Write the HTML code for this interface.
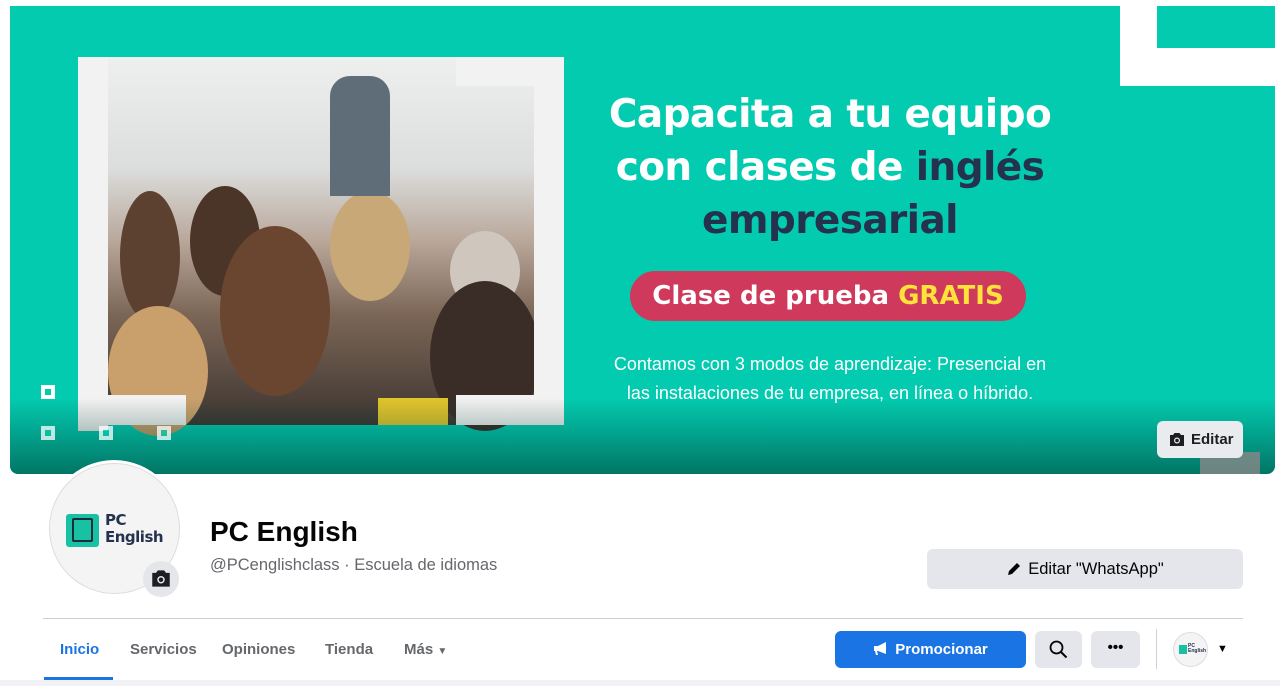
<!DOCTYPE html>
<html><head><meta charset="utf-8"><style>
*{margin:0;padding:0;box-sizing:border-box}
body{width:1280px;height:686px;background:#fff;font-family:"Liberation Sans",sans-serif;position:relative;overflow:hidden}
.abs{position:absolute}
.cover{left:10px;top:6px;width:1265px;height:468px;background:#03cbb0;border-radius:0 0 8px 8px;overflow:hidden}
.shade{left:0;top:392px;width:1265px;height:76px;background:linear-gradient(rgba(0,0,0,0),rgba(0,60,50,.6))}
.sq{width:14px;height:14px;background:#fff;border:4px solid #fff}
.sq::after{content:"";display:block;width:6px;height:6px;background:#03cbb0}
.h1{font-family:"DejaVu Sans",sans-serif;font-weight:bold;font-size:39px;line-height:53px;color:#fff;letter-spacing:-0.6px;text-align:center;width:560px}
.nav{font-size:15px;color:#65676b;font-weight:bold;top:641px}
.hd{border-radius:50%}
</style></head><body>
<div class="abs cover">
 <div class="abs" style="left:98px;top:51px;width:426px;height:368px;background:linear-gradient(180deg,#eef0f0 0%,#dcdedd 30%,#b9a79a 50%,#7b6656 70%,#3e3531 100%)"></div>
 <div class="abs hd" style="left:110px;top:185px;width:60px;height:130px;background:#5c4030"></div>
 <div class="abs hd" style="left:180px;top:180px;width:70px;height:110px;background:#4b3428"></div>
 <div class="abs hd" style="left:320px;top:185px;width:80px;height:110px;background:#c9a878"></div>
 <div class="abs hd" style="left:440px;top:225px;width:70px;height:80px;background:#cfc6bd"></div>
 <div class="abs hd" style="left:210px;top:220px;width:110px;height:170px;background:#6a4630"></div>
 <div class="abs hd" style="left:98px;top:300px;width:100px;height:130px;background:#c9a06c"></div>
 <div class="abs hd" style="left:420px;top:275px;width:110px;height:150px;background:#3a2c26"></div>
 <div class="abs" style="left:320px;top:70px;width:60px;height:120px;background:#5e6d78;border-radius:20px 20px 0 0"></div>
 <div class="abs" style="left:68px;top:51px;width:30px;height:374px;background:#f2f2f2"></div>
 <div class="abs" style="left:68px;top:389px;width:108px;height:30px;background:#f2f2f2"></div>
 <div class="abs" style="left:446px;top:51px;width:108px;height:29px;background:#f2f2f2"></div>
 <div class="abs" style="left:524px;top:51px;width:30px;height:368px;background:#f2f2f2"></div>
 <div class="abs" style="left:446px;top:389px;width:108px;height:30px;background:#f2f2f2"></div>
 <div class="abs" style="left:368px;top:392px;width:70px;height:27px;background:#e3c52c"></div>
 <div class="abs" style="left:1110px;top:0;width:155px;height:80px;background:#fff"></div>
 <div class="abs" style="left:1147px;top:0;width:118px;height:42px;background:#03cbb0"></div>
 <div class="abs h1" style="left:540px;top:82px">Capacita a tu equipo<br>con clases de <span style="color:#24324d">inglés</span><br><span style="color:#24324d">empresarial</span></div>
 <div class="abs" style="left:620px;top:265px;width:396px;height:50px;border-radius:25px;background:#cf3a5c;color:#fff;font-family:'DejaVu Sans',sans-serif;font-weight:bold;font-size:26px;text-align:center;line-height:50px">Clase de prueba <span style="color:#ffe23a">GRATIS</span></div>
 <div class="abs" style="left:540px;top:344px;width:560px;text-align:center;color:#fff;font-size:18px;line-height:29px">Contamos con 3 modos de aprendizaje: Presencial en<br>las instalaciones de tu empresa, en línea o híbrido.</div>
 <div class="abs shade"></div>
 <div class="abs sq" style="left:31px;top:379px"></div>
 <div class="abs sq" style="left:31px;top:420px;opacity:.75"></div>
 <div class="abs sq" style="left:89px;top:420px;opacity:.75"></div>
 <div class="abs sq" style="left:147px;top:420px;opacity:.75"></div>
 <div class="abs" style="left:1190px;top:446px;width:60px;height:22px;background:#888;opacity:.8"></div>
 <div class="abs" style="left:1147px;top:415px;width:86px;height:37px;border-radius:6px;background:#e9ebee;font-size:15px;font-weight:bold;color:#1c1e21;line-height:37px;padding-left:34px">Editar
  <svg class="abs" style="left:12px;top:11px" width="16" height="15" viewBox="0 0 16 15"><path d="M1 3h3l1.5-2h5L12 3h3v11H1z" fill="#1c1e21"/><circle cx="8" cy="8.5" r="3" fill="#e9ebee"/><circle cx="8" cy="8.5" r="1.8" fill="#1c1e21"/></svg></div>
</div>
<div class="abs" style="left:46px;top:460px;width:136px;height:138px;border-radius:50%;background:#fff"></div>
<div class="abs" style="left:49px;top:463px;width:131px;height:131px;border-radius:50%;background:#f4f4f4;border:1px solid #ddd"></div>
<div class="abs" style="left:66px;top:514px;width:33px;height:33px;border-radius:3px;background:#17c2a4"></div>
<div class="abs" style="left:72px;top:518px;width:21px;height:24px;border:2px solid #1f2b3a;border-radius:2px"></div>
<div class="abs" style="left:105px;top:512px;font-family:'DejaVu Sans',sans-serif;font-weight:bold;font-size:15px;line-height:17px;color:#24324d;letter-spacing:-0.5px">PC<br>English</div>
<div class="abs" style="left:143px;top:561px;width:36px;height:36px;border-radius:50%;background:#e4e6eb"></div>
<svg class="abs" style="left:151px;top:569px" width="20" height="19" viewBox="0 0 16 15"><path d="M1 3h3l1.5-2h5L12 3h3v11H1z" fill="#1c1e21"/><circle cx="8" cy="8.5" r="3" fill="#e4e6eb"/><circle cx="8" cy="8.5" r="1.8" fill="#1c1e21"/></svg>
<div class="abs" style="left:210px;top:516px;font-size:28px;font-weight:bold;color:#050505">PC English</div>
<div class="abs" style="left:210px;top:556px;font-size:16.5px;color:#65676b">@PCenglishclass · Escuela de idiomas</div>
<div class="abs" style="left:927px;top:549px;width:316px;height:40px;border-radius:6px;background:#e4e6eb;text-align:center;line-height:40px;font-size:16.5px;color:#050505">
 <svg style="vertical-align:-3px;margin-right:6px" width="16" height="16" viewBox="0 0 16 16"><path d="M2 14l1-4 8-8 3 3-8 8z" fill="#050505"/></svg>Editar "WhatsApp"</div>
<div class="abs" style="left:43px;top:618px;width:1200px;height:1px;background:#ced0d4"></div>
<div class="abs nav" style="left:60px;color:#1b74e4">Inicio</div>
<div class="abs" style="left:44px;top:677px;width:69px;height:3px;background:#1b74e4"></div>
<div class="abs nav" style="left:130px">Servicios</div>
<div class="abs nav" style="left:222px">Opiniones</div>
<div class="abs nav" style="left:325px">Tienda</div>
<div class="abs nav" style="left:404px">Más <span style="font-size:10px">▼</span></div>
<div class="abs" style="left:835px;top:631px;width:191px;height:37px;border-radius:6px;background:#1b74e4;color:#fff;font-weight:bold;font-size:15px;text-align:center;line-height:37px">
 <svg style="vertical-align:-2px;margin-right:6px" width="16" height="14" viewBox="0 0 16 14"><path d="M1 4h4l8-4v12l-8-3H4l1 4H3L2 9H1z" fill="#fff"/></svg>Promocionar</div>
<div class="abs" style="left:1035px;top:631px;width:47px;height:37px;border-radius:6px;background:#e4e6eb"></div>
<svg class="abs" style="left:1049px;top:640px" width="19" height="19" viewBox="0 0 19 19"><circle cx="7.5" cy="7.5" r="6" stroke="#050505" stroke-width="1.8" fill="none"/><path d="M12 12l5.5 5.5" stroke="#050505" stroke-width="2"/></svg>
<div class="abs" style="left:1091px;top:631px;width:49px;height:37px;border-radius:6px;background:#e4e6eb;text-align:center;line-height:34px;font-weight:bold;font-size:15px;color:#050505">•••</div>
<div class="abs" style="left:1156px;top:629px;width:1px;height:40px;background:#ced0d4"></div>
<div class="abs" style="left:1173px;top:632px;width:35px;height:35px;border-radius:50%;background:#f4f4f4;border:1px solid #ddd"></div>
<div class="abs" style="left:1179px;top:645px;width:8px;height:9px;background:#17c2a4"></div>
<div class="abs" style="left:1188px;top:644px;font-size:5px;line-height:5px;color:#24324d;font-weight:bold">PC<br>English</div>
<div class="abs" style="left:1217px;top:643px;font-size:11px;color:#050505">▼</div>
<div class="abs" style="left:0;top:680px;width:1280px;height:6px;background:#f0f2f5"></div>
</body></html>
